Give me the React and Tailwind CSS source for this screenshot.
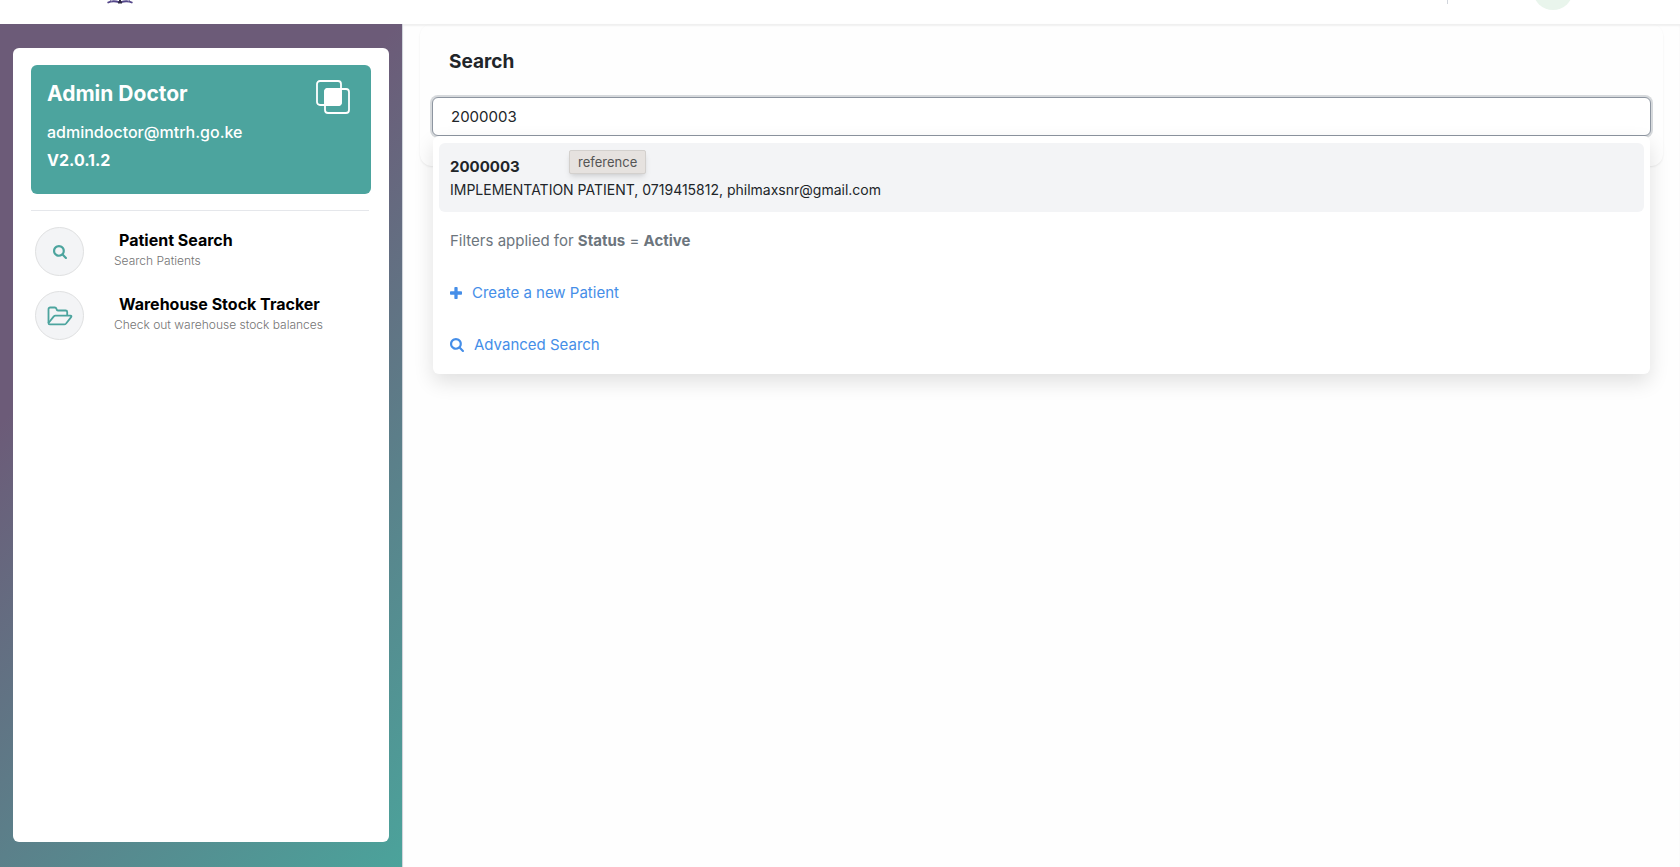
const PlusIcon = ({ className }) => (
  <svg viewBox="0 192 1408 1408" className={className} fill="currentColor" aria-hidden="true">
    <path d="M1408 800v192q0 40-28 68t-68 28H896v416q0 40-28 68t-68 28H608q-40 0-68-28t-28-68v-416H96q-40 0-68-28T0 992V800q0-40 28-68t68-28h416V288q0-40 28-68t68-28h192q40 0 68 28t28 68v416h416q40 0 68 28t28 68z" />
  </svg>
);

const SearchIcon = ({ className }) => (
  <svg viewBox="0 128 1664 1664" className={className} fill="currentColor" aria-hidden="true">
    <path d="M1152 832q0-185-131.5-316.5T704 384 387.5 515.5 256 832t131.5 316.5T704 1280t316.5-131.5T1152 832zm512 832q0 52-38 90t-90 38q-54 0-90-38l-343-342q-179 124-399 124-143 0-273.5-55.5t-225-150-150-225T0 832t55.5-273.5 150-225 225-150T704 128t273.5 55.5 225 150 150 225T1408 832q0 220-124 399l343 343q37 37 37 90z" />
  </svg>
);

const FolderIcon = ({ className }) => (
  <svg viewBox="0 0 26 20" className={className} fill="none" stroke="currentColor" strokeWidth="1.8" strokeLinejoin="round" aria-hidden="true">
    <path d="M1.5 17V3.2c0-1.2.7-1.7 1.7-1.7h4.6c1 0 1.4.4 1.6 1.2.2.9.6 1.8 1.6 1.8h7.6c1 0 1.6.6 1.6 1.5v3.7" />
    <path d="M1.5 17 6.6 10.6c.6-.7 1.1-.9 1.9-.9h15c1 0 1.2.7.6 1.4l-5 6.4c-.6.7-1.1.9-1.9.9H2.8c-.8 0-1.3-.5-1.3-1.4Z" />
  </svg>
);

const shortcuts = [
  {
    title: 'Patient Search',
    text: 'Search Patients',
    icon: <SearchIcon className="size-3.5" />,
  },
  {
    title: 'Warehouse Stock Tracker',
    text: 'Check out warehouse stock balances',
    icon: <FolderIcon className="w-[26px] h-5" />,
  },
];

function Header() {
  return (
    <header className="h-6 shrink-0 overflow-hidden flex items-start justify-between px-[107px] bg-white">
      <svg viewBox="0 0 26 4" className="w-[26px] h-1" fill="none" stroke="#54478a" strokeWidth="1.8">
        <path d="M.5 2.8C4 1 8.5 1 12 2.2h2C17.5 1 22 1 25.5 2.8" />
        <path d="M3 0l1.500 1.600M23 0l-1.500 1.600" stroke="#8a84a8" strokeWidth="1" />
        <path d="M11 2.500h4M13 0v3" stroke="#2f2a45" strokeWidth="2" />
      </svg>
      <div className="flex">
        <div className="w-px h-1 bg-gray-300 mr-[85px]"></div>
        <div className="size-10 -mt-[30px] rounded-full bg-[#e9f5ec]"></div>
      </div>
    </header>
  );
}

function Sidebar() {
  return (
    <aside className="w-[403px] shrink-0 pt-6 pb-[25px] px-[13px] flex border-r border-gray-300 bg-[linear-gradient(135deg,#6c5b78_32%,#4ba39b_100%)]">
      <div className="flex-1 bg-white rounded-md px-[18px] pt-[17px]">
        <div className="h-[129px] bg-[#4ca49e] rounded-md px-4 pt-3 text-white flex justify-between">
          <div>
            <h2 className="text-[21px] leading-[34px] font-bold">Admin Doctor</h2>
            <p className="mt-[7px] text-base leading-7 font-medium">admindoctor@mtrh.go.ke</p>
            <p className="text-base leading-7 font-bold">V2.0.1.2</p>
          </div>
          <button type="button" aria-label="Switch view" className="self-start mt-[3px] mr-[5px]">
            <svg viewBox="0 0 34 34" className="size-[34px]" fill="none" stroke="white" strokeWidth="1.8">
              <rect x="1" y="1" width="24" height="24" rx="3" />
              <rect x="9" y="9" width="24" height="24" rx="3" />
              <rect x="9" y="9" width="16" height="16" rx="3" fill="white" />
            </svg>
          </button>
        </div>
        <hr className="mt-4 mr-[2px] border-gray-200" />
        <nav className="mt-4 ml-1 flex flex-col gap-[15px]">
          {shortcuts.map((item) => (
            <a key={item.title} href="#" className="flex items-start">
              <span className="size-[49px] shrink-0 rounded-full border border-[#dfe0e1] bg-gray-100 text-[#4ca49e] flex items-center justify-center">
                {item.icon}
              </span>
              <span className="ml-[30px] pt-[3px]">
                <span className="block pl-[5px] text-base leading-5 font-bold text-black">{item.title}</span>
                <span className="block text-xs leading-[22px] font-light text-[#747474]">{item.text}</span>
              </span>
            </a>
          ))}
        </nav>
      </div>
    </aside>
  );
}

function SearchPanel() {
  return (
    <main className="flex-1 px-[17px] shadow-[inset_0_2px_2px_rgba(0,0,0,0.06)]">
      <section className="relative h-[142px] px-3 pt-6 rounded-xl shadow-[0_1px_2px_rgba(0,0,0,0.08)]">
        <label htmlFor="search" className="block pl-[17px] text-[19px] leading-7 font-bold text-[#212529]">
          Search
        </label>
        <input
          id="search"
          type="text"
          defaultValue="2000003"
          className="mt-[21px] block w-full h-[39px] px-[18px] rounded-md border border-[#8d95a0] bg-white text-[15px] text-[#212529] outline-none ring-2 ring-[#d6d9dc]"
        />
        <div className="absolute inset-x-[13px] top-[112px] rounded-md bg-white px-[6px] pt-[7px] pb-[3px] text-[15px] shadow-[0_8px_20px_rgba(0,0,0,0.12)]">
          <div className="relative h-[69px] rounded-md bg-gray-100 px-[11px] pt-3 text-[#212529]">
            <p className="leading-6 font-bold">2000003</p>
            <p className="text-sm leading-[22px]">IMPLEMENTATION PATIENT, 0719415812, philmaxsnr@gmail.com</p>
            <div role="tooltip" className="absolute left-[130px] top-[7px] px-2 rounded-xs text-[13px] leading-[22px] text-[#555555] bg-[#e6e2df] border border-[#d3d0cd] shadow-md">
              reference
            </div>
          </div>
          <p className="px-[11px] pt-[17px] pb-[14px] leading-6 text-[#6c757d]">
            Filters applied for <b>Status</b> = <b>Active</b>
          </p>
          <button type="button" className="flex items-center gap-[10px] px-[11px] py-[14px] leading-6 text-[#458ee8]">
            <PlusIcon className="size-3" />
            Create a new Patient
          </button>
          <button type="button" className="flex items-center gap-[10px] px-[11px] py-[14px] leading-6 text-[#458ee8]">
            <SearchIcon className="size-3.5" />
            Advanced Search
          </button>
        </div>
      </section>
    </main>
  );
}

export default function App() {
  return (
    <div className="min-h-screen flex flex-col bg-[#fefefe] font-['Inter',sans-serif]">
      <Header />
      <div className="flex-1 flex">
        <Sidebar />
        <SearchPanel />
      </div>
    </div>
  );
}
